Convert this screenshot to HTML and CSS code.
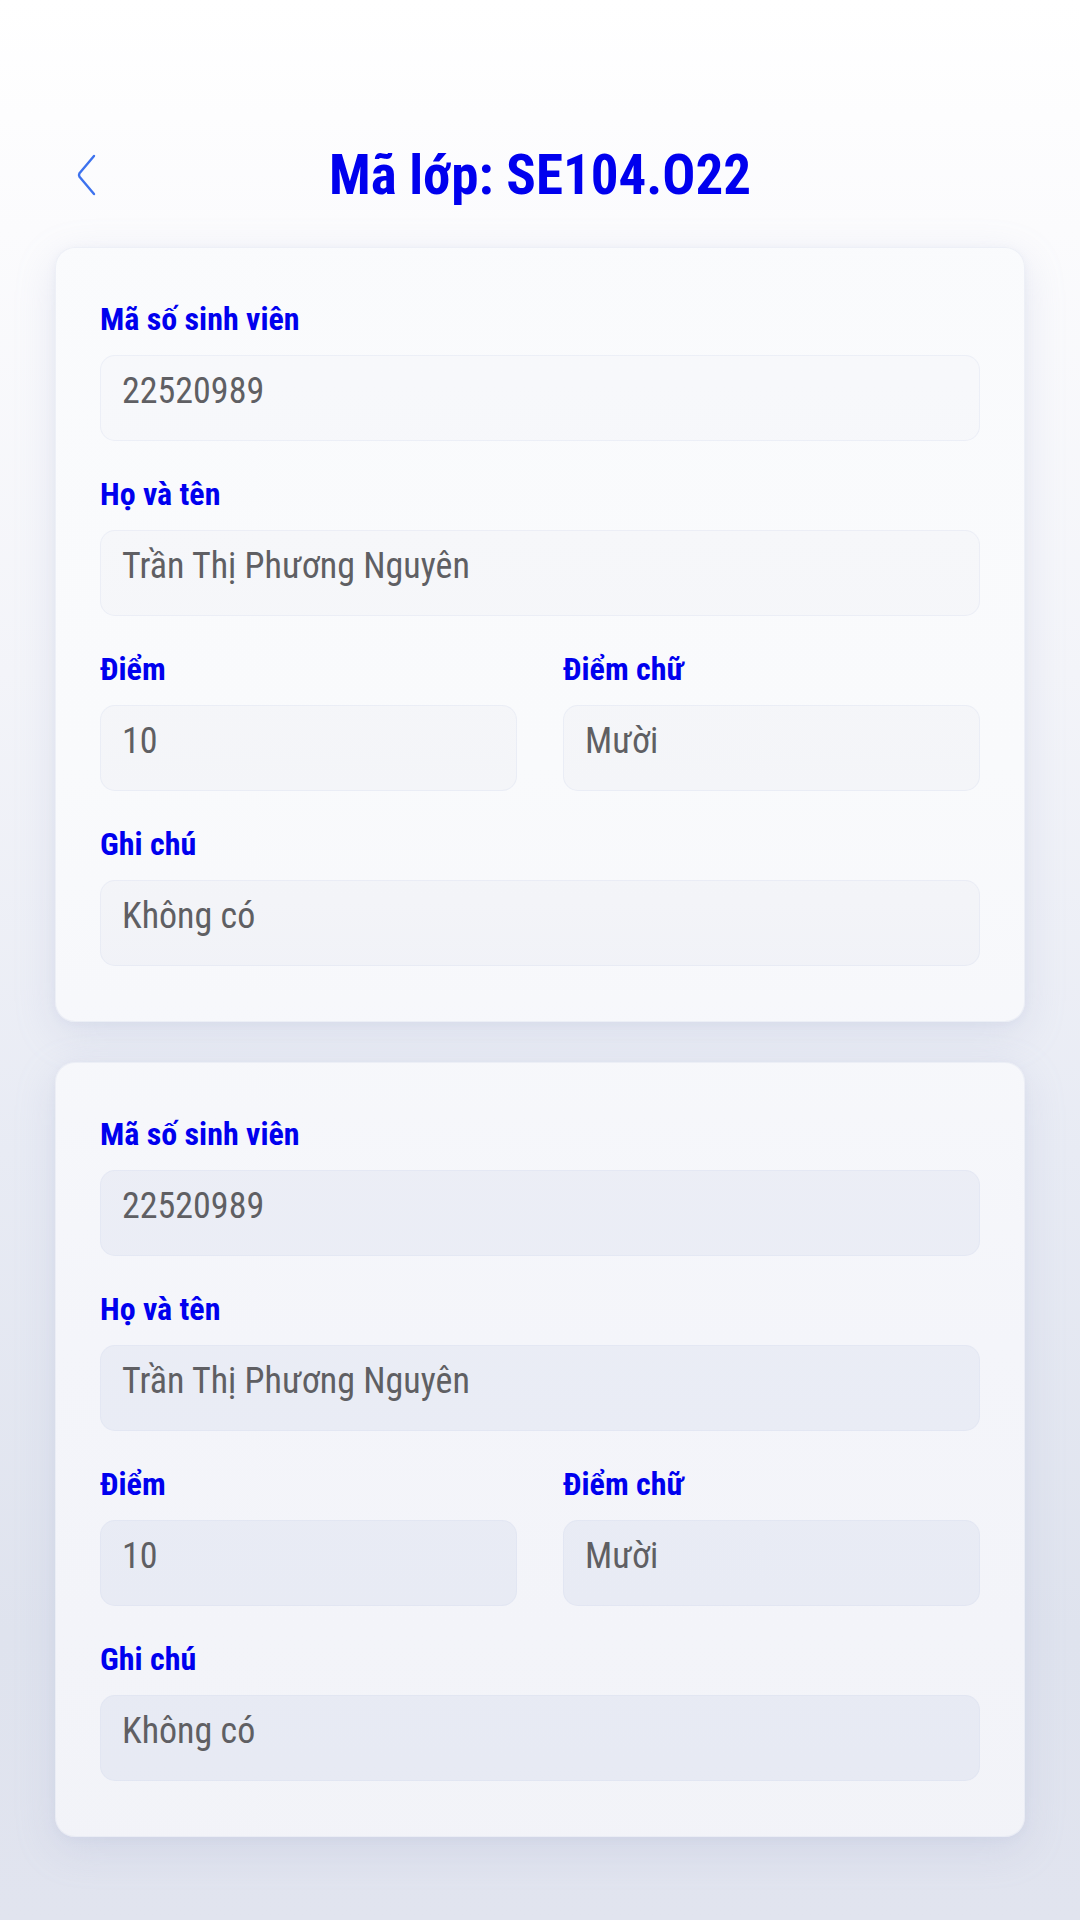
FILE: index.html
```html
<!DOCTYPE html>
<html lang="vi">
<head>
<meta charset="utf-8">
<title>Mã lớp: SE104.O22</title>
<link rel="stylesheet" href="styles.css">
</head>
<body>
<div class="screen">
  <header class="topbar">
    <button class="back" aria-label="Quay lại">
      <svg viewBox="0 0 24 42" width="24" height="42"><path d="M19 2 L4.5 19.2 Q3.5 21 4.5 22.8 L19 40" fill="none" stroke="#3d72ee" stroke-width="2.4" stroke-linecap="round" stroke-linejoin="round"/></svg>
    </button>
    <h1 class="title">Mã lớp: SE104.O22</h1>
    <span class="spacer"></span>
  </header>

  <main class="list">
    <section class="card">
      <div class="field">
        <div class="label">Mã số sinh viên</div>
        <div class="input">22520989</div>
      </div>
      <div class="field">
        <div class="label">Họ và tên</div>
        <div class="input">Trần Thị Phương Nguyên</div>
      </div>
      <div class="row">
        <div class="field">
          <div class="label">Điểm</div>
          <div class="input">10</div>
        </div>
        <div class="field">
          <div class="label">Điểm chữ</div>
          <div class="input">Mười</div>
        </div>
      </div>
      <div class="field">
        <div class="label">Ghi chú</div>
        <div class="input">Không có</div>
      </div>
    </section>

    <section class="card">
      <div class="field">
        <div class="label">Mã số sinh viên</div>
        <div class="input">22520989</div>
      </div>
      <div class="field">
        <div class="label">Họ và tên</div>
        <div class="input">Trần Thị Phương Nguyên</div>
      </div>
      <div class="row">
        <div class="field">
          <div class="label">Điểm</div>
          <div class="input">10</div>
        </div>
        <div class="field">
          <div class="label">Điểm chữ</div>
          <div class="input">Mười</div>
        </div>
      </div>
      <div class="field">
        <div class="label">Ghi chú</div>
        <div class="input">Không có</div>
      </div>
    </section>
  </main>
</div>
</body>
</html>
```
FILE: styles.css
```css
* { box-sizing: border-box; }

html, body {
  margin: 0;
  padding: 0;
}

body {
  width: 1080px;
  min-height: 1920px;
  font-family: "Roboto Condensed", Roboto, "Liberation Sans", sans-serif;
  font-stretch: condensed;
  background: linear-gradient(to bottom, #ffffff 0%, #fbfbfd 12%, #f3f4f9 35%, #e8ebf4 60%, #dfe3ee 85%, #e1e4ef 100%);
  background-attachment: fixed;
}

.screen {
  width: 1080px;
  min-height: 1920px;
}

.topbar {
  display: grid;
  grid-template-columns: 1fr auto 1fr;
  align-items: center;
  padding: 139px 0 0 0;
}

.back {
  justify-self: start;
  margin-left: 75px;
  padding: 0;
  border: 0;
  background: none;
  display: flex;
  align-items: center;
}

.title {
  margin: 0;
  font-size: 55px;
  line-height: 72px;
  font-weight: 700;
  color: #0000ee;
  letter-spacing: 0;
}

.list {
  display: flex;
  flex-direction: column;
  gap: 40px;
  padding: 36px 55px 0;
}

.card {
  display: flex;
  flex-direction: column;
  gap: 33px;
  padding: 51px 44px 55px;
  border-radius: 20px;
  background: linear-gradient(to bottom, #fafbfd 0%, #f9fafc 40%, #f4f5fa 70%, #f2f3f8 100%);
  background-attachment: fixed;
  border: 1px solid rgba(225, 229, 242, 0.5);
  box-shadow: 0 12px 40px rgba(160, 170, 205, 0.22), 0 2px 8px rgba(170, 180, 210, 0.12);
}

.field {
  display: flex;
  flex-direction: column;
  gap: 16px;
}

.row {
  display: grid;
  grid-template-columns: 1fr 1fr;
  gap: 46px;
}

.label {
  font-size: 32px;
  line-height: 40px;
  font-weight: 700;
  color: #0000ee;
}

.input {
  height: 86px;
  padding: 14px 21px 0;
  font-size: 36px;
  line-height: 43px;
  color: #5f5f63;
  border-radius: 15px;
  border: 1px solid rgba(215, 220, 238, 0.32);
  background: linear-gradient(to bottom, #f8f9fb 0%, #f7f8fb 20%, #f5f6f9 35%, #f3f4f8 47%, #eceef6 58%, #e9ecf5 75%, #e6e9f3 100%);
  background-attachment: fixed;
}
```
